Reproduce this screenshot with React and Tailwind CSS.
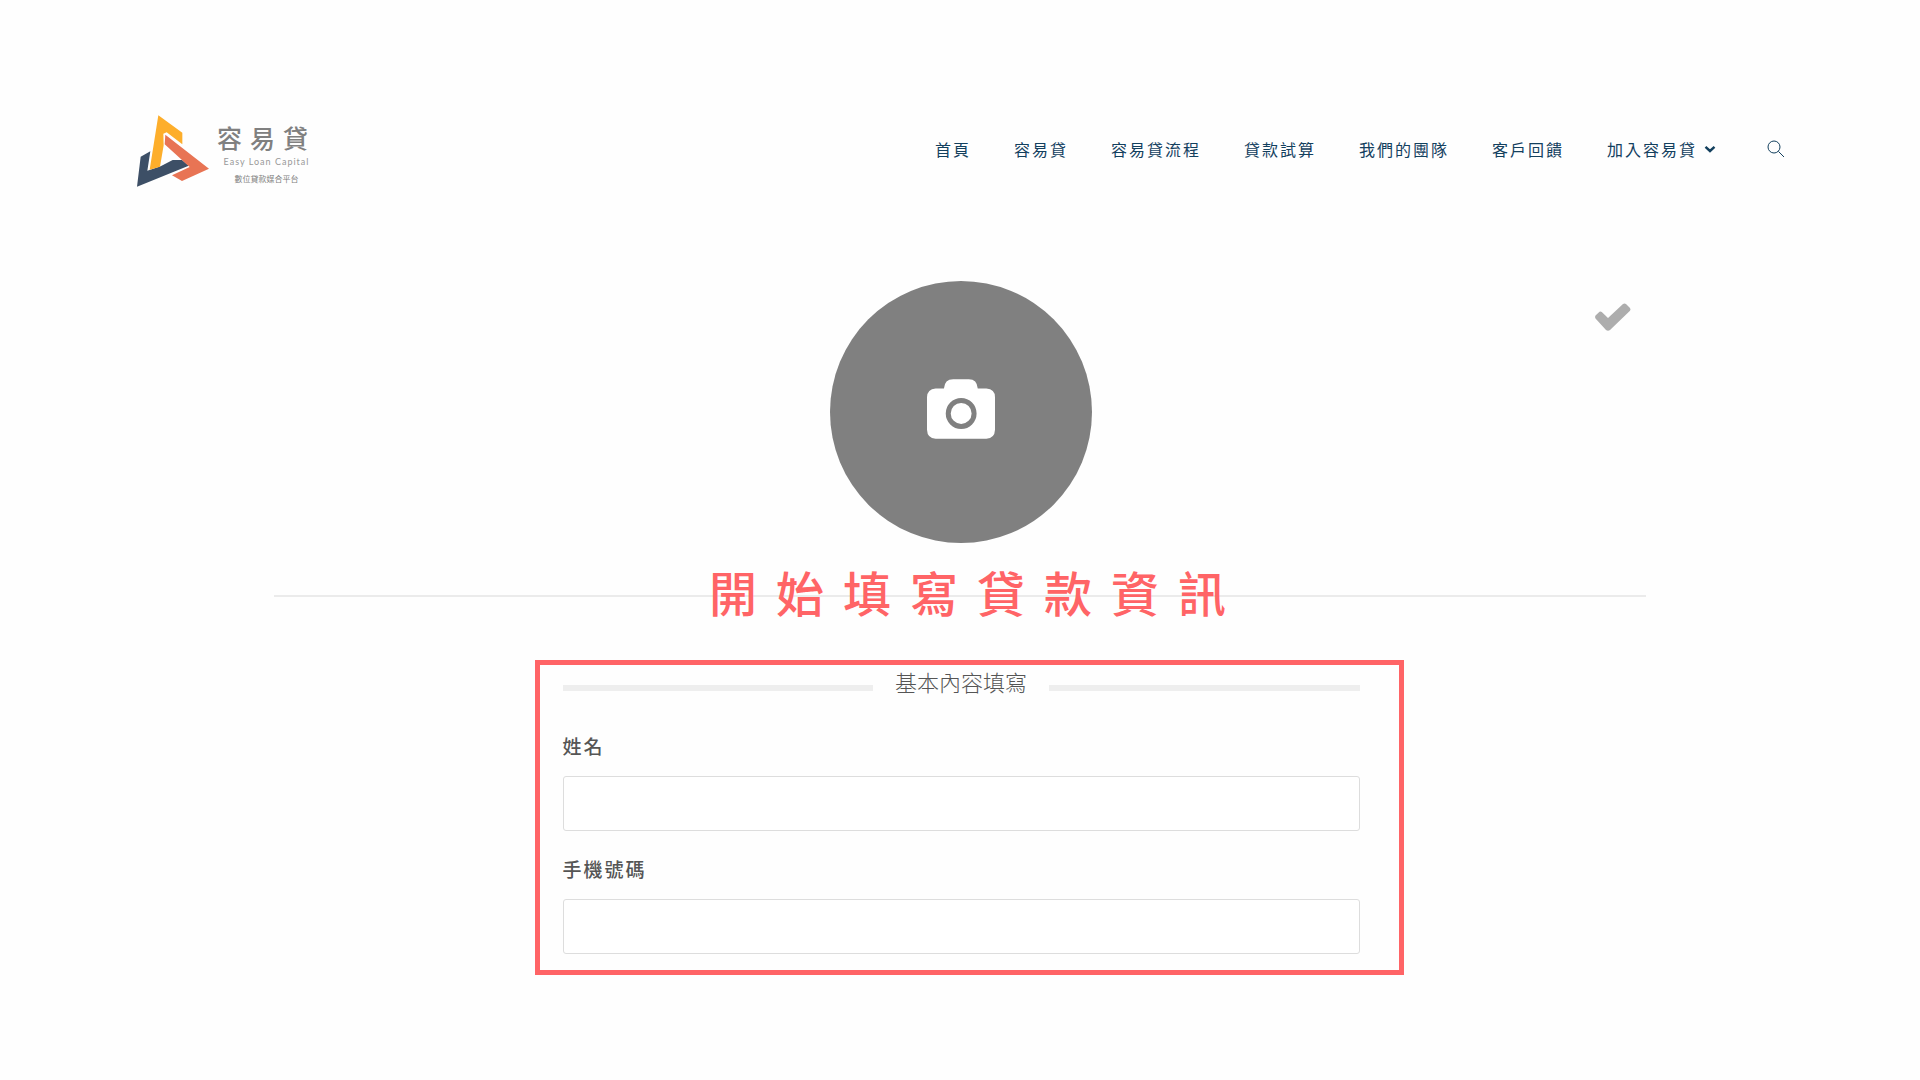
import React from 'react';

const navItems = ['首頁', '容易貸', '容易貸流程', '貸款試算', '我們的團隊', '客戶回饋'];

const fields = [
  { id: 'name', label: '姓名', type: 'text' },
  { id: 'phone', label: '手機號碼', type: 'tel' },
];

const Logo = () => (
  <a href="#" className="flex items-start text-[#808080]">
    <svg className="w-[72px] h-[73px]" viewBox="51 45 216 219">
      <path d="M91 154 L62 170 L51 260 L206 197 L186 180 L158 180 L122 199 L82 212 Z" fill="#3d4f66" />
      <path d="M115 46 L187 98 L187 133 L140 97 L130 101 L131 136 L120 200 L89 209 Z" fill="#fdae2b" />
      <path d="M136 104 L267 206 L186 243 L156 226 L209 201 L134 133 Z" fill="#e87454" />
    </svg>
    <span className="flex flex-col items-center ml-2 mt-[6px]">
      <span className="text-[25px] leading-8 font-medium tracking-[8px]">容易貸</span>
      <span className="text-[9px] leading-3 mt-[3px] tracking-[1px] text-[#999] font-['Lato']">Easy Loan Capital</span>
      <span className="text-[8px] leading-3 mt-[5px]">數位貸款媒合平台</span>
    </span>
  </a>
);

const Header = () => (
  <header className="flex items-start justify-between pl-[137px] pr-[135px] pt-[115px]">
    <Logo />
    <nav className="flex items-center gap-[43px] mt-[22px] text-base leading-6 tracking-[2px] text-[#13405e]">
      {navItems.map((item) => (
        <a key={item} href="#">{item}</a>
      ))}
      <a href="#" className="flex items-center gap-[7px]">
        加入容易貸
        <svg className="w-3 h-3" viewBox="0 0 12 12" fill="none" stroke="currentColor" strokeWidth="2.4">
          <path d="M1.5 3.8 L6 8 L10.5 3.8" />
        </svg>
      </a>
      <button type="button" aria-label="搜尋" className="ml-2">
        <svg className="w-[18px] h-[18px]" viewBox="0 0 18 18" fill="none" stroke="currentColor" strokeWidth="1">
          <circle cx="7" cy="7" r="6" />
          <path d="M11.4 11.4 L17 17" />
        </svg>
      </button>
    </nav>
  </header>
);

const FormTitle = () => (
  <div className="flex items-center gap-[22px] mb-[11px]">
    <span className="flex-1 h-[6px] mt-[14px] bg-[#eee]" />
    <h2 className="text-[22px] leading-8 font-light text-[#555]">基本內容填寫</h2>
    <span className="flex-1 h-[6px] mt-[14px] bg-[#eee]" />
  </div>
);

const App = () => {
  return (
    <div className="min-h-screen bg-[#fefefe] font-['Noto_Sans_CJK_TC',sans-serif]">
      <Header />

      <main>
        <section className="relative flex justify-center mt-[93px] pl-[2px]">
          <button
            type="button"
            aria-label="上傳照片"
            className="flex items-center justify-center w-[262px] h-[262px] pb-[6px] rounded-full bg-[#808080]"
          >
            <svg className="w-[68px] h-[60px]" viewBox="81 58 205 179">
              <path
                d="M107 86 H132 Q134 58 160 58 H207 Q232 58 234 86 H260 Q286 88 286 112 V210 Q285 236 260 237 H107 Q82 236 81 210 V112 Q82 88 107 86 Z"
                fill="#fff"
              />
              <circle cx="184" cy="161" r="39" fill="#fff" stroke="#808080" strokeWidth="15" />
            </svg>
          </button>
          <svg className="absolute right-[15%] top-[22px] w-[38px] h-[29px]" viewBox="0 0 38 29">
            <path
              d="M1.5 12.5 L5.5 8.8 Q6.5 8 7.8 9 L14 15 L29 1 Q30.5 0 32 1 L36 5 Q37 6.5 36 7.8 L16 27 Q14 28.5 12 27 L1.5 15.5 Q0.5 14 1.5 12.5 Z"
              fill="#adadad"
            />
          </svg>
        </section>

        {/* heading sits on top of the divider line */}
        <div className="grid items-center mt-4 mx-[274px]">
          <hr className="col-start-1 row-start-1 border-0 h-[2px] bg-[#ebebeb]" />
          <h1 className="col-start-1 row-start-1 pl-[34px] pb-[10px] text-center text-5xl leading-[64px] font-medium tracking-[19px] text-[#ff6466]">
            開始填寫貸款資訊
          </h1>
        </div>

        <div className="flex justify-center mt-[27px] pl-[18px]">
          <form className="w-full max-w-[869px] border-[5px] border-[#ff6466] pl-[23px] pr-[39px] pb-4">
            <FormTitle />
            {fields.map((field) => (
              <div key={field.id} className="pt-[22px]">
                <label htmlFor={field.id} className="block text-[19px] leading-8 font-medium tracking-[2px] text-[#555]">
                  {field.label}
                </label>
                <input
                  id={field.id}
                  type={field.type}
                  className="block w-full h-[55px] mt-[14px] px-4 text-lg border border-[#ddd] rounded-[3px] bg-white"
                />
              </div>
            ))}
          </form>
        </div>
      </main>
    </div>
  );
};

export default App;
